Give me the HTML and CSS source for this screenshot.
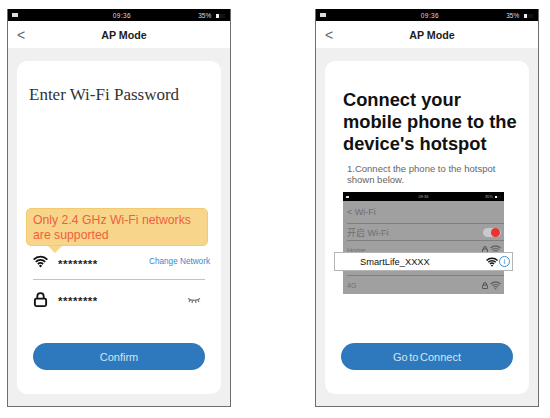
FILE: index.html
```html
<!DOCTYPE html>
<html lang="en">
<head>
    <meta charset="UTF-8">
    <meta name="viewport" content="width=device-width, initial-scale=1.0">
    <title>AP Mode</title>
    <link rel="stylesheet" href="styles.css">
</head>
<body>
    <svg class="icon-defs" width="0" height="0" aria-hidden="true">
        <symbol id="wifi" viewBox="0 0 16 13">
            <path d="M.7 4.4a10.4 10.4 0 0 1 14.6 0M3 6.8a7.2 7.2 0 0 1 10 0M5.2 9.2a4 4 0 0 1 5.6 0" fill="none" stroke="currentColor" stroke-width="1.9"/>
            <path d="M6.4 10.9a2.2 2.2 0 0 1 3.2 0L8 12.8z" fill="currentColor"/>
        </symbol>
        <symbol id="lock" viewBox="0 0 14 16">
            <path d="M3.6 7V4.6a3.4 3.4 0 0 1 6.8 0V7" fill="none" stroke="currentColor" stroke-width="1.9"/>
            <rect x="1" y="7" width="12" height="8" rx="1.6" fill="none" stroke="currentColor" stroke-width="2"/>
        </symbol>
    </svg>

    <!-- Wi-Fi password screen -->
    <div class="phone">
        <div class="status-bar">
            <span class="status-left"><i class="signal"></i></span>
            <span class="status-time">09:36</span>
            <span class="status-right">35% <i class="battery"></i></span>
        </div>
        <div class="top-bar">
            <span class="back">&lt;</span>
            <span class="top-title">AP Mode</span>
        </div>
        <div class="card">
            <h2 class="serif-title">Enter Wi-Fi Password</h2>
            <div class="tooltip">Only 2.4 GHz Wi-Fi networks are supported</div>
            <div class="field field-wifi">
                <svg class="field-icon"><use href="#wifi"/></svg>
                <span class="stars">********</span>
                <a class="change-link">Change Network</a>
            </div>
            <div class="field field-pass">
                <svg class="field-icon"><use href="#lock"/></svg>
                <span class="stars">********</span>
                <svg class="eye" viewBox="0 0 14 7">
                    <path d="M1 1.5c3 2.6 9 2.6 12 0M3 3l-1 2M5.5 3.8 5 6M8.5 3.8 9 6M11 3l1 2" fill="none" stroke="#7a7a7a" stroke-width="1.2"/>
                </svg>
            </div>
            <button class="main-btn">Confirm</button>
        </div>
    </div>

    <!-- Hotspot screen -->
    <div class="phone">
        <div class="status-bar">
            <span class="status-left"><i class="signal"></i></span>
            <span class="status-time">09:36</span>
            <span class="status-right">35% <i class="battery"></i></span>
        </div>
        <div class="top-bar">
            <span class="back">&lt;</span>
            <span class="top-title">AP Mode</span>
        </div>
        <div class="card card-hotspot">
            <h1 class="big-title">Connect your mobile phone to the device's hotspot</h1>
            <p class="step">1.Connect the phone to the hotspot shown below.</p>
            <div class="mini-screen">
                <div class="mini-status">
                    <i class="signal"></i>
                    <span>09:36</span>
                    <span>35% <i class="battery battery-small"></i></span>
                </div>
                <div class="mini-row mini-back">&lt; Wi-Fi</div>
                <div class="mini-row mini-toggle-row"><span class="mini-cjk">开启 Wi-Fi</span> <i class="mini-toggle"></i></div>
                <div class="mini-row mini-home">Home <span class="mini-icons"><svg class="mini-lock"><use href="#lock"/></svg><svg class="mini-wifi"><use href="#wifi"/></svg></span></div>
                <div class="mini-row mini-hidden"></div>
                <div class="mini-row mini-last">4G <span class="mini-icons"><svg class="mini-lock"><use href="#lock"/></svg><svg class="mini-wifi"><use href="#wifi"/></svg></span></div>
            </div>
            <div class="hotspot-row">
                <span>SmartLife_XXXX</span>
                <svg class="hotspot-wifi"><use href="#wifi"/></svg>
                <span class="info">i</span>
            </div>
            <button class="main-btn main-btn-tight">Go to Connect</button>
        </div>
    </div>
</body>
</html>
```

FILE: styles.css
```css
* {
    margin: 0;
    padding: 0;
    box-sizing: border-box;
}

html, body {
    height: 100%;
    background-color: #fff;
    font-family: "Liberation Sans", Arial, sans-serif;
}

body {
    display: flex;
    gap: 84px;
    padding: 9px 0 0 7px;
}

.icon-defs {
    position: absolute;
}

/* Phone frame */
.phone {
    width: 224px;
    height: 398px;
    border: 1px solid #6e6e6e;
    border-top: 0;
    background-color: #f0f0f0;
    display: flex;
    flex-direction: column;
}

.status-bar {
    height: 12px;
    background-color: #000;
    color: #ddd;
    font-size: 6.5px;
    display: grid;
    grid-template-columns: 1fr auto 1fr;
    align-items: center;
    padding: 0 4px;
}

.status-time {
    letter-spacing: .4px;
    padding-left: 6px;
}

.status-right {
    text-align: right;
    padding-right: 1px;
}

.signal {
    display: block;
    width: 6px;
    height: 4px;
    background-color: #ddd;
}

.battery {
    display: inline-block;
    width: 9px;
    height: 4px;
    margin-left: 3px;
    background: linear-gradient(90deg, #eee 35%, #111 35%);
}

.top-bar {
    height: 27px;
    padding-left: 10px;
    background-color: #fff;
    display: flex;
    align-items: center;
    justify-content: center;
    position: relative;
}

.top-title {
    font-size: 10.7px;
    font-weight: bold;
    color: #1c1c1c;
}

.back {
    position: absolute;
    left: 9px;
    top: 6px;
    font-size: 14px;
    color: #666;
}

/* Card */
.card {
    position: relative;
    flex: none;
    height: 333px;
    margin: 13px 9px 0;
    padding: 24px 12px 0;
    background-color: #fff;
    border-radius: 10px;
}

.serif-title {
    font-family: "Liberation Serif", serif;
    font-weight: normal;
    font-size: 17px;
    color: #333;
}

.tooltip {
    position: absolute;
    left: 9px;
    top: 147px;
    width: 182px;
    height: 38px;
    padding: 4px 6px;
    background-color: #f7d68c;
    border: 1px solid #f4ca70;
    border-radius: 5px;
    color: #f0603a;
    font-size: 12.25px;
    line-height: 15px;
}

.tooltip::after {
    content: "";
    position: absolute;
    left: 21px;
    bottom: -8px;
    border: 7px solid transparent;
    border-bottom: 0;
    border-top-color: #f7d68c;
}

.field {
    display: flex;
    align-items: center;
    color: #111;
    margin: 0 4px;
    width: 172px;
}

.field-wifi {
    margin-top: 136px;
    height: 39px;
    padding-top: 3px;
    border-bottom: 1px solid #c4c4c4;
}

.field-pass {
    height: 34px;
    padding-top: 4px;
}

.field-icon {
    width: 15px;
    height: 15px;
    margin-right: 10px;
    flex: none;
}

.stars {
    font-size: 11.5px;
    font-weight: bold;
    letter-spacing: .5px;
    color: #222;
    line-height: 1;
    padding-top: 6px;
}

.change-link {
    margin-left: auto;
    margin-right: -5px;
    font-size: 8.2px;
    color: #3b86c8;
}

.eye {
    width: 14px;
    height: 7px;
    margin-left: auto;
    margin-right: 4px;
    margin-top: 2px;
}

.main-btn {
    position: absolute;
    left: 16px;
    top: 282px;
    width: 172px;
    height: 27px;
    border: 0;
    border-radius: 14px;
    background-color: #2e79bd;
    color: #d5e4f2;
    font-family: "Liberation Sans", Arial, sans-serif;
    font-size: 11px;
}

.main-btn-tight {
    word-spacing: -1.5px;
}

/* Hotspot card */
.card-hotspot {
    padding: 28px 0 0 18px;
}

.big-title {
    font-size: 18.3px;
    line-height: 22px;
    color: #111;
    width: 176px;
}

.step {
    margin: 8px 0 0 4px;
    width: 160px;
    font-size: 9.5px;
    line-height: 11px;
    color: #666;
}

.mini-screen {
    width: 161px;
    height: 102px;
    margin-top: 7px;
    background-color: #a0a0a0;
    color: #6f6f6f;
    font-size: 8.5px;
}

.mini-status {
    height: 9px;
    background-color: #000;
    color: #aaa;
    font-size: 4px;
    display: grid;
    grid-template-columns: 1fr auto 1fr;
    align-items: center;
    padding: 0 3px;
}

.mini-status .signal {
    width: 3px;
    height: 2px;
}

.mini-status span:last-child {
    text-align: right;
}

.battery-small {
    width: 6px;
    height: 2px;
    margin-left: 1px;
}

.mini-row {
    display: flex;
    align-items: center;
    justify-content: space-between;
    margin-left: 4px;
    padding-right: 3px;
    border-bottom: 1px solid #7f7f7f;
}

.mini-back {
    height: 23px;
    font-size: 9px;
}

.mini-toggle-row {
    height: 17px;
    font-size: 9px;
}

.mini-cjk {
    font-family: "Liberation Sans", "Noto Sans CJK SC", sans-serif;
}

.mini-home {
    height: 13px;
    font-size: 7px;
    align-items: flex-end;
    border: 0;
}

.mini-hidden {
    height: 22px;
}

.mini-last {
    height: 18px;
    border: 0;
    font-size: 7px;
}

.mini-toggle {
    position: relative;
    width: 18px;
    height: 9px;
    border-radius: 5px;
    background-color: #c9c9c9;
}

.mini-toggle::after {
    content: "";
    position: absolute;
    right: 1px;
    top: 0;
    width: 9px;
    height: 9px;
    border-radius: 50%;
    background-color: #ee3030;
}

.mini-icons {
    display: flex;
    align-items: center;
    gap: 2px;
    color: #666;
}

.mini-lock {
    width: 6px;
    height: 7px;
    color: #444;
}

.mini-wifi {
    width: 11px;
    height: 9px;
}

.hotspot-row {
    position: absolute;
    left: 9px;
    top: 191px;
    width: 179px;
    height: 19px;
    display: flex;
    align-items: center;
    padding: 0 2px 0 25px;
    background-color: #fff;
    border: 1px solid #b5b5b5;
    font-size: 9.3px;
    color: #111;
}

.hotspot-wifi {
    width: 12px;
    height: 10px;
    margin-left: auto;
    margin-right: 1px;
    color: #111;
}

.info {
    width: 11px;
    height: 11px;
    border: 1px solid #3f8fd0;
    border-radius: 50%;
    color: #3f8fd0;
    font-size: 8px;
    line-height: 9px;
    text-align: center;
}
```
